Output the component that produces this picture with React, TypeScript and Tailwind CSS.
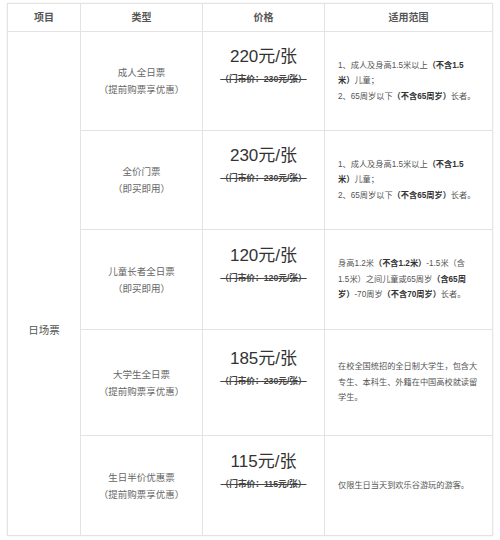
import React from "react";

type Row = {
  name: string;
  note: string;
  price: string;
  was: string;
  scope: React.ReactNode;
  h: string;
};

const B = ({ children }: { children: React.ReactNode }) => (
  <b className="font-bold text-[#333]">{children}</b>
);

const adultScope = (
  <>
    1、成人及身高1.5米以上<B>（不含1.5</B>
    <br />
    <B>米）</B>儿童；
    <br />
    2、65周岁以下<B>（不含65周岁）</B>长者。
  </>
);

const rows: Row[] = [
  {
    name: "成人全日票",
    note: "（提前购票享优惠）",
    price: "220元/张",
    was: "（门市价：230元/张）",
    h: "h-[99px]",
    scope: adultScope,
  },
  {
    name: "全价门票",
    note: "（即买即用）",
    price: "230元/张",
    was: "（门市价：230元/张）",
    h: "h-[99px]",
    scope: adultScope,
  },
  {
    name: "儿童长者全日票",
    note: "（即买即用）",
    price: "120元/张",
    was: "（门市价：120元/张）",
    h: "h-[100px]",
    scope: (
      <>
        身高1.2米<B>（不含1.2米）</B>-1.5米（含
        <br />
        1.5米）之间儿童或65周岁<B>（含65周</B>
        <br />
        <B>岁）</B>-70周岁<B>（不含70周岁）</B>长者。
      </>
    ),
  },
  {
    name: "大学生全日票",
    note: "（提前购票享优惠）",
    price: "185元/张",
    was: "（门市价：230元/张）",
    h: "h-[106px]",
    scope: (
      <>
        在校全国统招的全日制大学生，包含大
        <br />
        专生、本科生、外籍在中国高校就读留
        <br />
        学生。
      </>
    ),
  },
  {
    name: "生日半价优惠票",
    note: "（提前购票享优惠）",
    price: "115元/张",
    was: "（门市价：115元/张）",
    h: "h-[100px]",
    scope: <>仅限生日当天到欢乐谷游玩的游客。</>,
  },
];

export default function App() {
  return (
    <div
      className="w-[500px] h-[540px] bg-white overflow-hidden"
      style={{ fontFamily: '"Liberation Sans", "Noto Sans CJK SC", sans-serif' }}
    >
      <table className="ml-[7px] mt-[3px] w-[485px] table-fixed border-collapse border border-[#dedede] shadow-[0_0_2px_rgba(0,0,0,0.08)]">
        <colgroup>
          <col className="w-[73px]" />
          <col className="w-[122px]" />
          <col className="w-[122px]" />
          <col className="w-[168px]" />
        </colgroup>
        <thead>
          <tr className="h-[28px]">
            {["项目", "类型", "价格", "适用范围"].map((t) => (
              <th
                key={t}
                className="border border-[#e3e3e3] text-[10px] font-bold text-[#555] text-center align-middle p-0"
              >
                {t}
              </th>
            ))}
          </tr>
        </thead>
        <tbody>
          {rows.map((r, i) => (
            <tr key={r.name} className={r.h}>
              {i === 0 && (
                <td
                  rowSpan={rows.length}
                  className="border border-[#e3e3e3] text-center align-middle p-0 pt-[94px] text-[10.5px] text-[#555]"
                >
                  日场票
                </td>
              )}
              <td className="border border-[#e3e3e3] text-center align-middle p-0 text-[9.5px] leading-[17px] text-[#666]">
                {r.name}
                <br />
                {r.note}
              </td>
              <td className="border border-[#e3e3e3] text-center align-middle p-0 pb-[30px]">
                <div className="text-[17px] leading-[22px] text-[#333]">{r.price}</div>
                <div className="mt-[4px] text-[8.7px] leading-[14px] font-bold text-[#444] line-through">
                  {r.was}
                </div>
              </td>
              <td className="border border-[#e3e3e3] align-middle px-[13px] py-0 text-[8.2px] leading-[15.5px] text-[#555] whitespace-nowrap">
                {r.scope}
              </td>
            </tr>
          ))}
        </tbody>
      </table>
    </div>
  );
}
